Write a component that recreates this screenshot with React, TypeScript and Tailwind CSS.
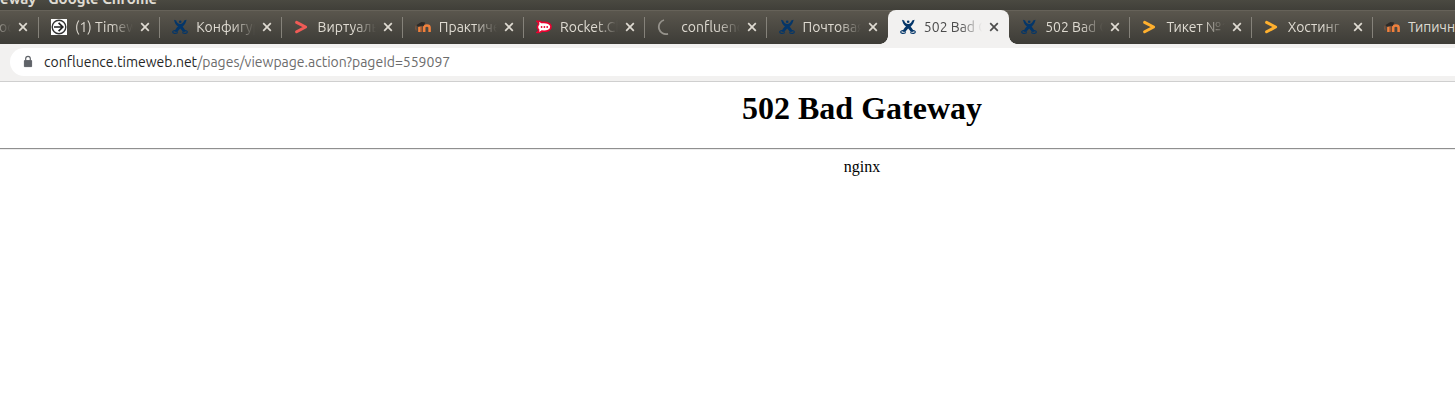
import type { ReactNode } from "react";

function ConfluenceIcon() {
  return (
    <svg viewBox="0 0 16 16" className="size-4 shrink-0" fill="none" stroke="#043669" aria-hidden="true">
      <circle cx="8.2" cy="2.8" r="1.3" fill="#043669" stroke="none" />
      <path d="M2 .8L4.2 1.4C4.8 3.4 6.2 4.8 8.2 5C10.2 4.8 11.4 3.4 12.2 1.4L14.6.8C14 3.8 12.6 6 10.6 7.8C12 9.2 13 10.6 13.6 12.4L10.8 13C10.2 11.6 9.4 10.4 8.2 9.4C7 10.4 6 11.6 5.4 13L2.6 12.4C3.4 10.4 4.4 9 6 7.6C3.8 6 2.6 3.8 2 .8z" fill="#043669" stroke="none" />
      <path d="M4.4 12C2.6 11.2.7 11.8.7 13c0 1.5 2.8 2 5.1.4" strokeWidth="1.2" />
      <path d="M11.8 12c1.8-.8 3.5-.2 3.5 1c0 1.5-2.8 2-5 .4" strokeWidth="1.2" />
    </svg>
  );
}

function ArrowBoxIcon() {
  return (
    <svg viewBox="0 0 16 16" className="size-4 shrink-0" fill="none" aria-hidden="true">
      <path d="M0 0h16v16H0z" fill="#fff" />
      <circle cx="8" cy="8" r="6.8" stroke="#333" strokeWidth="1.4" />
      <path d="M3 8h8.5M7.6 3.8L11.8 8L7.6 12.2" stroke="#222" strokeWidth="1.7" />
    </svg>
  );
}

function ChevronMark({ color }: { color: string }) {
  return (
    <svg viewBox="0 0 16 16" className="size-4 shrink-0" fill="none" aria-hidden="true">
      <path d="M2.6 3.4L11.6 8L2.6 12.8" stroke={color} strokeWidth="3" strokeLinecap="round" strokeLinejoin="round" />
    </svg>
  );
}

function MoodleIcon() {
  return (
    <svg viewBox="0 0 16 16" className="size-4 shrink-0" fill="none" aria-hidden="true">
      <path d="M4.4 13V7.6M9.2 13V8.6c0-2.8 5.4-2.8 5.4 0V13" stroke="#f0803c" strokeWidth="2.5" />
      <path d="M6.6 13V7.4" stroke="#a3552c" strokeWidth="1.4" />
      <path d="M.8 6.4L6.4 3l3.8.4L8.8 7C7 6.6 5.2 7 3.6 7.8z" fill="#2c2a28" />
      <path d="M1.2 6.4C.6 8 .8 9.8 1.2 11.4" stroke="#8c5b40" strokeWidth="1" />
    </svg>
  );
}

function RocketChatIcon() {
  return (
    <svg viewBox="0 0 16 16" className="size-4 shrink-0" aria-hidden="true">
      <path
        d="M1.2 2.4C3 2 4.6 2.6 5.8 3.5C11 2.8 15 4.7 15 7.8c0 3.2-4 5-9.2 4.3C4.6 13.3 3 13.8 1.2 13.4C2.4 12.6 2.8 11.6 2.6 10.8C1.2 9.2 1.2 6.8 2.6 5.2C2.8 4.2 2.2 3.2 1.2 2.4z"
        fill="#fff"
        stroke="#e9002f"
        strokeWidth="1.6"
      />
      <circle cx="5.6" cy="8" r=".9" fill="#e9002f" />
      <circle cx="8.4" cy="8" r=".9" fill="#e9002f" />
      <circle cx="11.2" cy="8" r=".9" fill="#e9002f" />
    </svg>
  );
}

function SpinnerIcon() {
  return (
    <svg viewBox="0 0 16 16" className="size-4 shrink-0" fill="none" aria-hidden="true">
      <path d="M7 1A7 7 0 0 0 11 14.8" stroke="#96938c" strokeWidth="1.8" />
    </svg>
  );
}

function CloseButton({ title }: { title: string }) {
  return (
    <button type="button" aria-label={`Close ${title}`} className="flex size-4 shrink-0 items-center justify-center">
      <svg viewBox="0 0 10 10" className="size-[10px]" fill="none" stroke="currentColor" strokeWidth="1.7" aria-hidden="true">
        <path d="M1.2 1.2l7.6 7.6M8.8 1.2L1.2 8.8" />
      </svg>
    </button>
  );
}

type TabInfo = { title: string; icon: ReactNode; active?: boolean; plain?: boolean };

const tabs: TabInfo[] = [
  { title: "(1) Timeweb", icon: <ArrowBoxIcon /> },
  { title: "Конфигурация", icon: <ConfluenceIcon /> },
  { title: "Виртуальный", icon: <ChevronMark color="#f05b56" /> },
  { title: "Практические", icon: <MoodleIcon /> },
  { title: "Rocket.Chat", icon: <RocketChatIcon /> },
  { title: "confluence", icon: <SpinnerIcon /> },
  { title: "Почтовая", icon: <ConfluenceIcon />, plain: true },
  { title: "502 Bad Gateway", icon: <ConfluenceIcon />, active: true },
  { title: "502 Bad Gateway", icon: <ConfluenceIcon /> },
  { title: "Тикет №1", icon: <ChevronMark color="#ffb02e" /> },
  { title: "Хостинг", icon: <ChevronMark color="#ffb02e" /> },
];

const fade = "[mask-image:linear-gradient(to_right,#000_calc(100%-22px),transparent)]";

function Separator() {
  return <span className="absolute right-0 top-[7px] h-[21px] w-px bg-[#85827a]" />;
}

function Tab({ title, icon, active, plain }: TabInfo) {
  return (
    <div
      className={`relative flex min-w-0 flex-1 items-center pl-3 pr-[7px] ${
        active ? "rounded-t-lg bg-[#f2f1f0] text-[#4c4c4c]" : "text-[#dfdbd2]"
      }`}
    >
      {active && (
        <>
          <span className="absolute -left-2 bottom-0 size-2 bg-[radial-gradient(circle_at_0_0,transparent_7.5px,#f2f1f0_8px)]" />
          <span className="absolute -right-2 bottom-0 size-2 bg-[radial-gradient(circle_at_100%_0,transparent_7.5px,#f2f1f0_8px)]" />
        </>
      )}
      {icon}
      <a href="#" className={`ml-2 mr-1 min-w-0 flex-1 overflow-hidden whitespace-nowrap ${fade}`}>
        {title}
      </a>
      <CloseButton title={title} />
      {!active && !plain && <Separator />}
    </div>
  );
}

export default function App() {
  return (
    <div className="min-h-screen overflow-hidden bg-white font-['Ubuntu','Noto_Sans',sans-serif] text-sm">
      <header>
        <div className="flex h-[10px] items-end overflow-hidden bg-linear-to-b from-[#4a4941] to-[#403f39] text-[15px] font-bold leading-[22px] text-[#dfdbd2]">
          <span className="whitespace-nowrap">eway - Google Chrome</span>
        </div>
        <nav
          aria-label="Tabs"
          className="flex h-[34px] overflow-hidden bg-linear-to-b from-[#5b574e] to-[#3d3c37] shadow-[inset_0_1px_0_#666259]"
        >
          <div className="relative flex w-[39px] shrink-0 items-center justify-between pr-2 text-[#dfdbd2]">
            <a href="#" className="-ml-px w-3 overflow-hidden whitespace-nowrap [mask-image:linear-gradient(to_right,#0008,transparent)]">
              oc
            </a>
            <CloseButton title="tab" />
            <Separator />
          </div>
          {tabs.map((tab, i) => (
            <Tab key={i} {...tab} />
          ))}
          <div className="flex w-[82px] shrink-0 items-center gap-2 overflow-hidden pl-[11px] text-[#dfdbd2]">
            <MoodleIcon />
            <a href="#" className="whitespace-nowrap">
              Типичные
            </a>
          </div>
        </nav>
        <div className="border-b border-[#cfcfcf] bg-[#f2f1f0] pb-[5px] pl-[10px] pt-1">
          <div className="flex h-7 items-center gap-2 rounded-l-full bg-white pl-[10px]">
            <svg viewBox="0 0 16 16" className="size-4 shrink-0" fill="none" aria-hidden="true">
              <path d="M4.4 6.6h7.2v6H4.4z" fill="#5f6368" stroke="#5f6368" strokeLinejoin="round" />
              <path d="M5.7 6.5V4.6a2.3 2.3 0 0 1 4.6 0v1.9" stroke="#5f6368" strokeWidth="1.2" />
            </svg>
            <a href="#" aria-label="Page address" className="whitespace-nowrap text-[#6c6c6c]">
              <span className="text-[#262626]">confluence.timeweb.net</span>/pages/viewpage.action?pageId=559097
            </a>
          </div>
        </div>
      </header>
      <main className="pt-2 font-['Liberation_Serif',serif] text-base leading-[18px] text-black">
        <h1 className="pl-[269px] text-center text-[32px] font-bold leading-[37px]">502 Bad Gateway</h1>
        <hr className="mb-2 mt-[21px] h-[2px] border-t border-[#8f8f8f] bg-[#ededed]" />
        <p className="pl-[269px] text-center">nginx</p>
      </main>
    </div>
  );
}
